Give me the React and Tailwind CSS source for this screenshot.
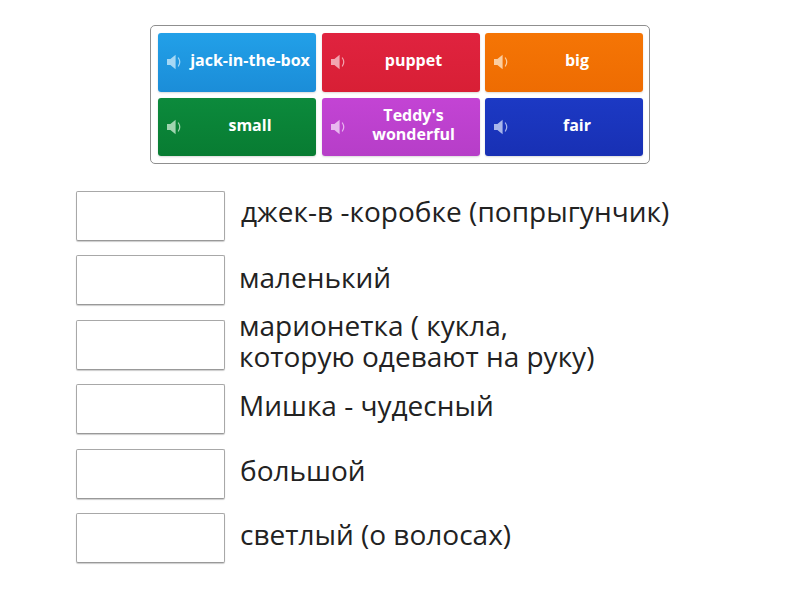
const tiles = [
  { t: ["jack-in-the-box"], c: "bg-gradient-to-b from-[#22a0e8] to-[#1b8dd8]", w: "text-[#a5d8f5]" },
  { t: ["puppet"], c: "bg-gradient-to-b from-[#e0233f] to-[#d81f35]", w: "text-[#f2a5b0]" },
  { t: ["big"], c: "bg-gradient-to-b from-[#f57505] to-[#ee6c02]", w: "text-[#fbcda0]" },
  { t: ["small"], c: "bg-gradient-to-b from-[#0c8a3c] to-[#087c32]", w: "text-[#a0d4b0]" },
  { t: ["Teddy's", "wonderful"], c: "bg-gradient-to-b from-[#c344d4] to-[#b63ec8]", w: "text-[#e8b8ef]" },
  { t: ["fair"], c: "bg-gradient-to-b from-[#1c39c4] to-[#1830b4]", w: "text-[#a8b6ea]" },
];

const rows = [
  { l: ["джек-в -коробке (попрыгунчик)"], x: "ml-[16px] pb-[10px] tracking-[0.03px]" },
  { l: ["маленький"], x: "ml-[14px] pb-[6px]" },
  { l: ["марионетка ( кукла,", "которую одевают на руку)"], x: "ml-[14px] pb-[8px]" },
  { l: ["Мишка - чудесный"], x: "ml-[14px] pb-[8px]" },
  { l: ["большой"], x: "ml-[15px] pb-[6px]" },
  { l: ["светлый (о волосах)"], x: "ml-[15px] pb-[6px]" },
];

function Speaker({ className }) {
  return (
    <svg viewBox="0 0 14 16" className={"w-[14px] h-[16px] " + className} fill="none">
      <path d="M0 5h3.4L8.6 0.8v14.4L3.4 11H0z" fill="currentColor" />
      <path d="M11.4 4c1.7 2.5 1.7 5.5 0 8" stroke="currentColor" strokeWidth="1.2" strokeLinecap="round" />
    </svg>
  );
}

export default function App() {
  return (
    <div className="w-[800px] h-[600px] bg-white overflow-hidden flex flex-col items-center font-['Open_Sans',sans-serif]">
      <div className="mt-[25px] w-[500px] h-[139px] border border-[#8f8f8f] rounded-[5px] pt-[7px] pl-[7px] grid grid-cols-[158px_158px_158px] grid-rows-[58.5px_58.5px] gap-x-[5.5px] gap-y-[6px]">
        {tiles.map((tile) => (
          <div key={tile.t[0]} className={"rounded-[3px] flex items-center pl-[9px] shadow-[0_1px_2px_rgba(0,0,0,0.15)] " + tile.c}>
            <Speaker className={"shrink-0 " + tile.w} />
            <div className="flex-1 pl-[3px] pb-[3px] text-center text-white font-bold text-[16px] leading-[19px] whitespace-nowrap">
              {tile.t.map((s) => <div key={s}>{s}</div>)}
            </div>
          </div>
        ))}
      </div>
      <div className="mt-[27px] w-[800px] pl-[76px] flex flex-col gap-[14.4px]">
        {rows.map((r) => (
          <div key={r.l[0]} className="flex items-center h-[50px]">
            <div className="w-[149px] h-[50px] shrink-0 border border-[#a8a8a8] border-b-[#999] rounded-[2px] shadow-[0_1px_1px_rgba(0,0,0,0.2)]" />
            <div className={"text-[#222] text-[28px] leading-[31px] whitespace-nowrap " + r.x}>
              {r.l.map((s) => <div key={s}>{s}</div>)}
            </div>
          </div>
        ))}
      </div>
    </div>
  );
}
